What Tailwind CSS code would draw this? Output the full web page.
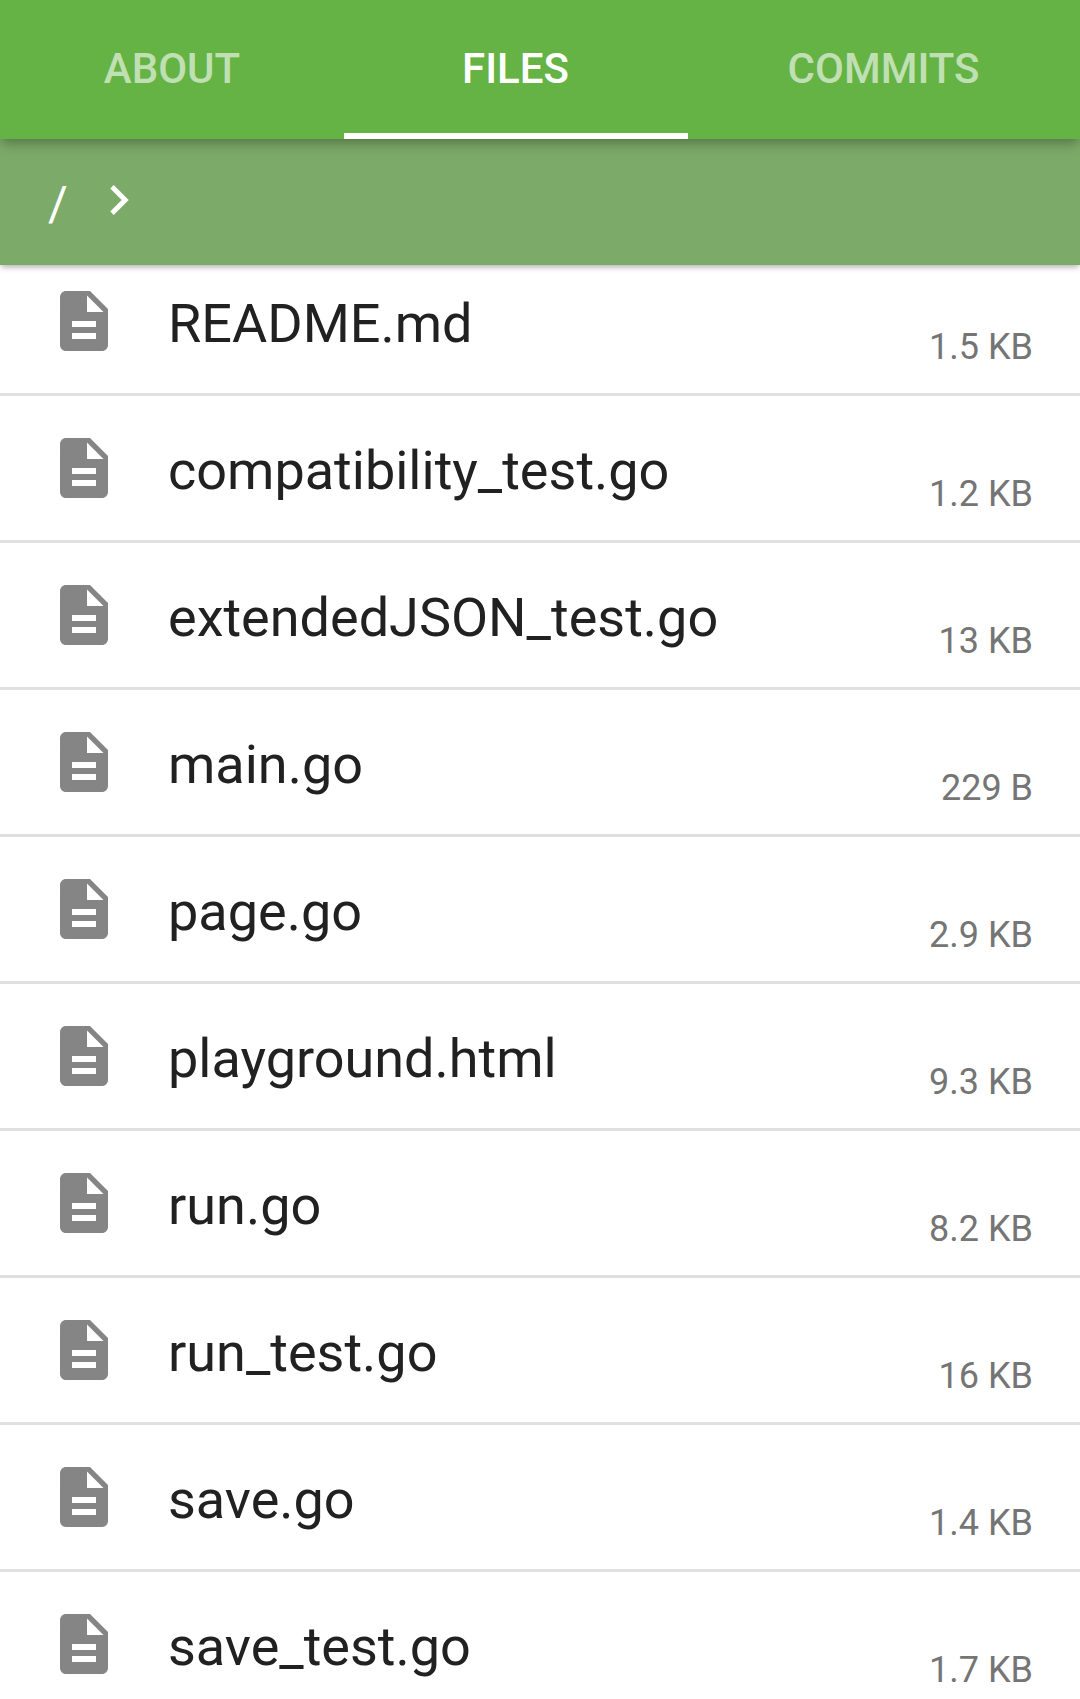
<!DOCTYPE html>
<html lang="en">
<head>
<meta charset="utf-8">
<title>Files</title>
<script src="https://cdn.jsdelivr.net/npm/@tailwindcss/browser@4"></script>
</head>
<body class="bg-white font-['Roboto',sans-serif]">
<svg class="hidden">
  <symbol id="file" viewBox="0 0 24 24"><path d="M14 2H6c-1.1 0-1.99.9-1.99 2L4 20c0 1.1.89 2 1.99 2H18c1.1 0 2-.9 2-2V8l-6-6zm2 16H8v-2h8v2zm0-4H8v-2h8v2zm-3-5V3.5L18.5 9H13z"/></symbol>
</svg>
<div class="flex h-[1699px] w-[1080px] flex-col overflow-hidden">
  <nav class="relative z-20 grid h-[139px] shrink-0 grid-cols-[344px_344px_392px] bg-[#65b345] text-center text-[42px] leading-[138px] font-medium text-white/60 shadow-[0_5px_12px_-1px_rgba(0,0,0,0.32)]">
    <a>ABOUT</a>
    <a class="h-[139px] border-b-6 border-white pr-px text-white">FILES</a>
    <a class="pr-px">COMMITS</a>
  </nav>
  <div class="relative z-10 flex h-[126px] shrink-0 items-center bg-[#7caa68] pl-12 text-white shadow-[0_3px_6px_-1px_rgba(0,0,0,0.32)]">
    <span class="mt-[3px] w-[62px] text-[48px] leading-[56px]">/</span>
    <svg class="-mt-1 h-[30px] w-[19px] fill-current" viewBox="8.5 6 7.6 12"><path d="M10 6L8.59 7.41 13.17 12l-4.58 4.59L10 18l6-6z"/></svg>
  </div>
  <ul id="files" class="-mt-4"></ul>
</div>
<script>
const files = [
  ["README.md", "1.5 KB"], ["compatibility_test.go", "1.2 KB"], ["extendedJSON_test.go", "13 KB"],
  ["main.go", "229 B"], ["page.go", "2.9 KB"], ["playground.html", "9.3 KB"], ["run.go", "8.2 KB"],
  ["run_test.go", "16 KB"], ["save.go", "1.4 KB"], ["save_test.go", "1.7 KB"]
];
document.getElementById("files").innerHTML = files.map(([name, size]) => `
  <li class="flex h-[147px] items-start border-b-3 border-[#e0e0e0] pr-[47px] pl-12">
    <svg class="mt-9 size-[72px] fill-[#858585]"><use href="#file"/></svg>
    <span class="mt-[43px] ml-12 flex-1 text-[54px] leading-[64px] text-[#212121]">${name}</span>
    <span class="mt-[77px] text-[36px] leading-[42px] text-[#757575]">${size}</span>
  </li>`).join("");
</script>
</body>
</html>
